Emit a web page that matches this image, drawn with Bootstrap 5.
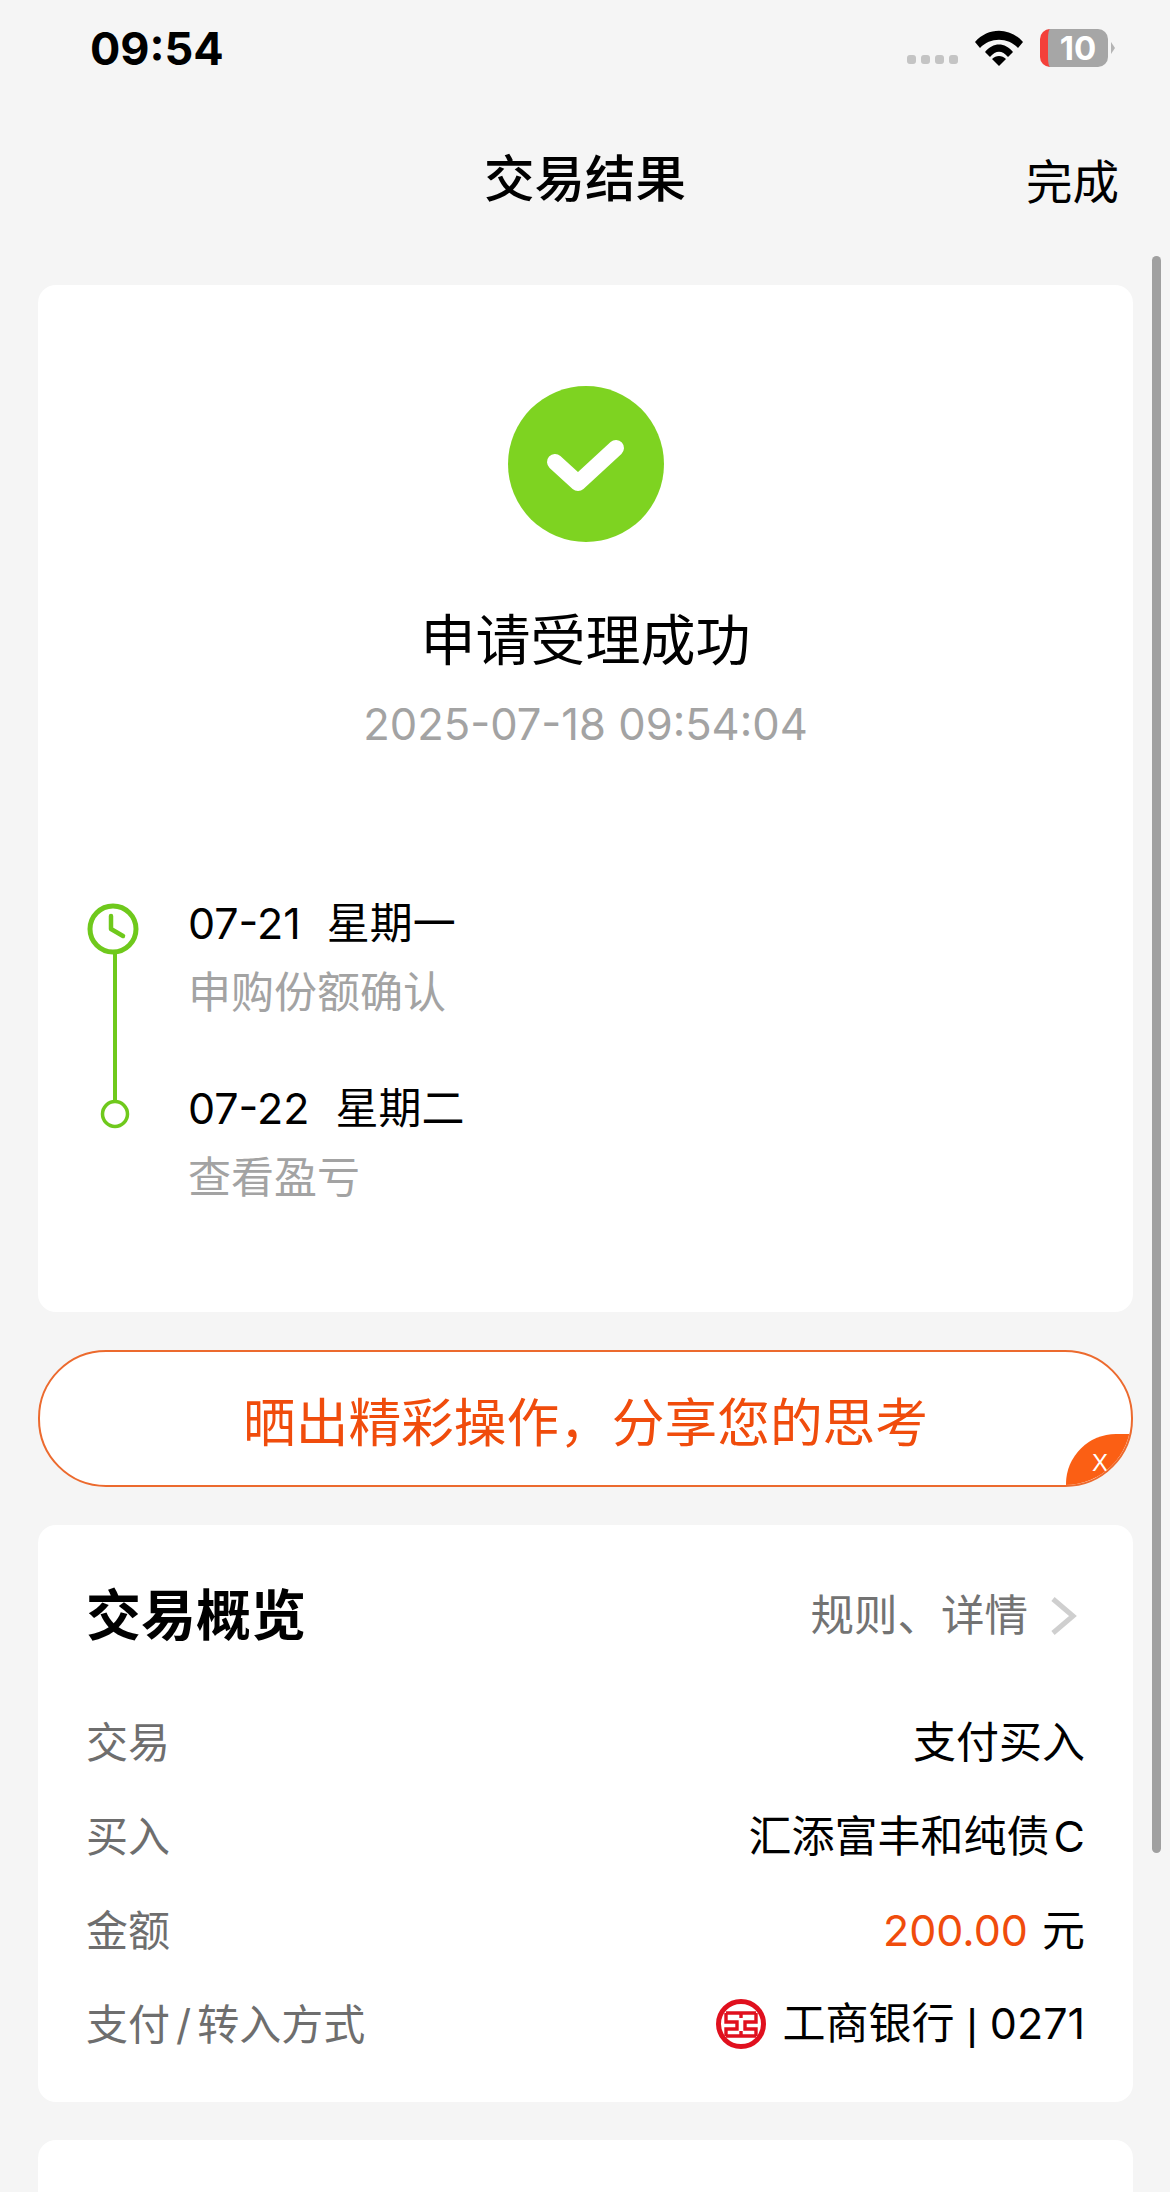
<!DOCTYPE html>
<html lang="zh-CN">
<head>
    <meta charset="UTF-8">
    <meta name="viewport" content="width=device-width, initial-scale=1.0">
    <title>交易结果</title>
    <link href="https://cdn.jsdelivr.net/npm/bootstrap@5.3.0/dist/css/bootstrap.min.css" rel="stylesheet">
    <style>
        html, body { height: 2192px; overflow: hidden; }
        body {
            background-color: #f5f5f5;
            color: #000;
            font-family: Inter, "Noto Sans CJK SC", sans-serif;
            position: relative;
        }
        /* status bar */
        .status-wrap { height: 96px; padding: 0 55px 0 90px; }
        .status-time { font: 700 45px/1 Inter, sans-serif; }
        .signal-dots { gap: 5px; margin-right: 17px; margin-top: 23px; }
        .signal-dots span { width: 9px; height: 9px; border-radius: 3px; background: #c4c4c4; }
        .batt-box {
            width: 68px; height: 38px; border-radius: 10px; background: #a6a6a6; color: #fff;
            border-left: 8px solid #f4403a; margin-left: 17px;
            font: 700 33px/38px Inter, sans-serif; text-align: center;
        }
        .batt-tip {
            width: 0; height: 0; margin-left: 3px;
            border-left: 4px solid #b4b4b4; border-top: 6px solid transparent; border-bottom: 6px solid transparent;
        }
        /* nav */
        .nav-wrap { height: 189px; padding-bottom: 23px; position: relative; }
        .nav-name { font-size: 50.5px; font-weight: 500; line-height: 1; }
        .nav-done { font-size: 46.5px; line-height: 1; position: absolute; right: 51px; top: 63px; }
        .page-body { padding: 0 37px 0 38px; }
        .pane { border: 0; border-radius: 18px; background: #fff; }
        .pane-result { height: 1027px; padding-top: 101px; margin-bottom: 38px; }
        .result-name { font-size: 55px; line-height: 1; margin-top: 71px; }
        .result-date { font-size: 43.5px; line-height: 1; color: #a3a3a3; margin-top: 35px; }
        .tl-wrap { margin: 155px 0 0 48px; gap: 46px; }
        .tl-date { font-size: 43px; line-height: 1; }
        .tl-note { font-size: 43px; line-height: 1; color: #a3a3a3; margin-top: 26px; }
        .tl-next { margin-top: 73px; }
        .tl-gap { margin-left: 26px; }
        /* share banner */
        .share-bar {
            height: 137px; border: 2px solid #ec6a2e; border-radius: 68px; background: #fff;
            color: #f04c0c; font-size: 52.7px; padding-top: 10px; margin-bottom: 38px;
            position: relative; overflow: hidden;
        }
        .share-close {
            position: absolute; right: 0; bottom: 0; width: 65px; height: 51px;
            background: #fb5f14; border-top-left-radius: 50px; color: #fff;
            font: 400 24px/1 "Liberation Sans", sans-serif; padding: 17px 0 0 26px;
        }
        /* summary */
        .pane-summary { height: 577px; padding: 63px 48px 0; margin-bottom: 38px; }
        .sum-title { font-size: 55px; font-weight: 700; line-height: 1; }
        .sum-link { font-size: 43.5px; line-height: 1; color: #737373; margin-right: 8px; gap: 21px; }
        .sum-head { margin-bottom: 52px; }
        .sum-row { height: 94px; font-size: 43px; }
        .sum-key { color: #6e6e6e; font-size: 42px; }
        .sum-money { color: #f04c0c; }
        .sum-slash { margin: 0 6px; }
        .sum-pipe { font-family: "Liberation Sans", sans-serif; }
        .sum-unit { margin-left: 2px; }
        .pane-next { height: 120px; }
        .scroll-thumb {
            position: absolute; left: 1152px; top: 256px; width: 9px; height: 1597px;
            background: #a0a0a0; border-radius: 5px;
        }
    </style>
</head>
<body>

    <!-- status bar -->
    <div class="status-wrap d-flex align-items-center justify-content-between">
        <div class="status-time">09:54</div>
        <div class="d-flex align-items-center">
            <div class="signal-dots d-flex"><span></span><span></span><span></span><span></span></div>
            <svg width="48" height="36" viewBox="0 0 48 36">
                <path d="M0 12 C13 -3 35 -3 48 12 L43 18 C33 7 15 7 5 18 Z" fill="#000"/>
                <path d="M10 22 C18 12 30 12 38 22 L33 27 C27 20 21 20 15 27 Z" fill="#000"/>
                <path d="M24 36 L17 29 C21 25 27 25 31 29 Z" fill="#000"/>
            </svg>
            <div class="batt-box">10</div>
            <div class="batt-tip"></div>
        </div>
    </div>

    <!-- title -->
    <div class="nav-wrap d-flex align-items-center justify-content-center">
        <div class="nav-name">交易结果</div>
        <div class="nav-done">完成</div>
    </div>

    <div class="page-body">
        <!-- result -->
        <div class="card pane pane-result">
            <div class="text-center">
                <svg width="156" height="156" viewBox="0 0 156 156" class="d-block mx-auto">
                    <circle cx="78" cy="78" r="78" fill="#7ed321"/>
                    <path d="M47 76 L70 97 L108 62" fill="none" stroke="#fff" stroke-width="16" stroke-linecap="round" stroke-linejoin="round"/>
                </svg>
                <div class="result-name">申请受理成功</div>
                <div class="result-date">2025-07-18 09:54:04</div>
            </div>
            <div class="tl-wrap d-flex">
                <svg width="56" height="240" viewBox="0 0 56 240" class="flex-shrink-0">
                    <line x1="29" y1="50" x2="29" y2="214" stroke="#6fc91c" stroke-width="4"/>
                    <circle cx="27" cy="27" r="23" fill="#fff" stroke="#6fc91c" stroke-width="5"/>
                    <path d="M25 14 V27 L37 34" fill="none" stroke="#6fc91c" stroke-width="4.5" stroke-linecap="round" stroke-linejoin="round"/>
                    <circle cx="29" cy="212" r="12.5" fill="#fff" stroke="#6fc91c" stroke-width="3.5"/>
                </svg>
                <div>
                    <div class="tl-date">07-21<span class="tl-gap">星期一</span></div>
                    <div class="tl-note">申购份额确认</div>
                    <div class="tl-date tl-next">07-22<span class="tl-gap">星期二</span></div>
                    <div class="tl-note">查看盈亏</div>
                </div>
            </div>
        </div>

        <!-- share banner -->
        <div class="share-bar d-flex align-items-center justify-content-center">
            晒出精彩操作，分享您的思考
            <div class="share-close">X</div>
        </div>

        <!-- summary -->
        <div class="card pane pane-summary">
            <div class="sum-head d-flex align-items-center justify-content-between">
                <div class="sum-title">交易概览</div>
                <div class="sum-link d-flex align-items-center">
                    规则、详情
                    <svg width="28" height="40" viewBox="0 0 28 40">
                        <path d="M4 3 L24 20 L4 37" fill="none" stroke="#cfcfcf" stroke-width="5"/>
                    </svg>
                </div>
            </div>
            <div class="sum-row d-flex align-items-center justify-content-between">
                <div class="sum-key">交易</div>
                <div>支付买入</div>
            </div>
            <div class="sum-row d-flex align-items-center justify-content-between">
                <div class="sum-key">买入</div>
                <div>汇添富丰和纯债<span class="ms-1">C</span></div>
            </div>
            <div class="sum-row d-flex align-items-center justify-content-between">
                <div class="sum-key">金额</div>
                <div><span class="sum-money">200.00</span><span class="sum-unit"> 元</span></div>
            </div>
            <div class="sum-row d-flex align-items-center justify-content-between">
                <div class="sum-key">支付<span class="sum-slash">/</span>转入方式</div>
                <div class="d-flex align-items-center gap-3">
                    <svg width="50" height="50" viewBox="0 0 50 50">
                        <circle cx="25" cy="25" r="22.5" fill="none" stroke="#e0101e" stroke-width="5"/>
                        <path d="M10 14 H40 M25 14 V19 M10 14 V23 H21 V30 H10 V37 M40 14 V23 H29 V30 H40 V37 M10 37 H40 M25 32 V37" fill="none" stroke="#e0101e" stroke-width="3.4"/>
                    </svg>
                    <div>工商银行 <span class="sum-pipe">|</span> 0271</div>
                </div>
            </div>
        </div>

        <div class="card pane pane-next"></div>
    </div>

    <div class="scroll-thumb"></div>

    <script src="https://cdn.jsdelivr.net/npm/bootstrap@5.3.0/dist/js/bootstrap.bundle.min.js"></script>
</body>
</html>
